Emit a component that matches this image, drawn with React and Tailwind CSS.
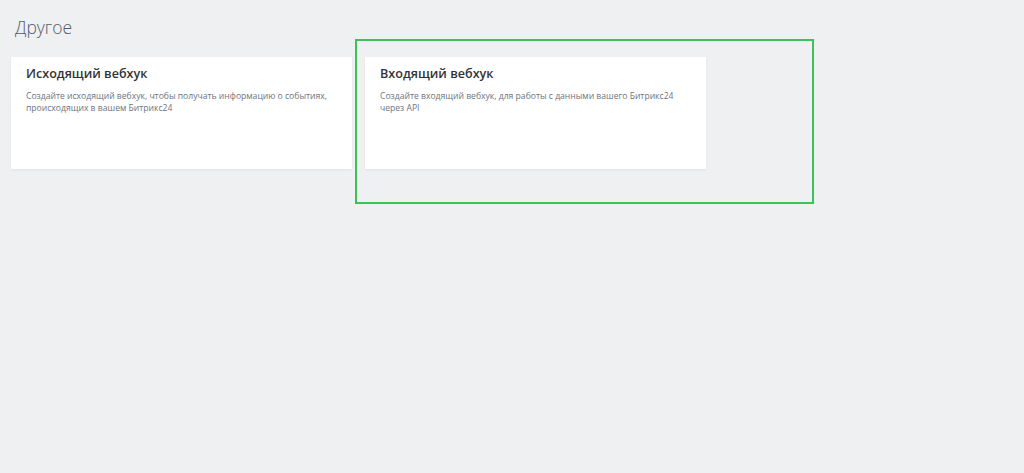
export default function App() {
  const cards = [
    {
      title: "Исходящий вебхук",
      text: "Создайте исходящий вебхук, чтобы получать информацию о событиях, происходящих в вашем Битрикс24",
    },
    {
      title: "Входящий вебхук",
      text: "Создайте входящий вебхук, для работы с данными вашего Битрикс24 через API",
    },
  ];
  return (
    <div
      className="relative w-[1024px] h-[473px] bg-[#eef0f2] overflow-hidden"
      style={{ fontFamily: '"Open Sans", "Noto Sans", sans-serif' }}
    >
      <h1 className="pl-[15px] pt-[14px] text-[17.5px] leading-[26px] font-light text-[#535c69]">
        Другое
      </h1>
      <div className="flex gap-[13px] pl-[11px] pt-[17px]">
        {cards.map((c) => (
          <div
            key={c.title}
            className="w-[341px] h-[112px] bg-white px-[15px] pt-[8px] shadow-[0_1px_2px_rgba(0,0,0,0.06)]"
          >
            <div className="text-[12.6px] leading-[18px] font-semibold text-[#333]">{c.title}</div>
            <p className="mt-[7px] text-[8.6px] leading-[12px] text-[#6c7480]">{c.text}</p>
          </div>
        ))}
      </div>
      {/* selection frame over the second card */}
      <div className="absolute left-[355px] top-[39px] w-[459px] h-[165px] border-2 border-[#3cc257]" />
    </div>
  );
}
